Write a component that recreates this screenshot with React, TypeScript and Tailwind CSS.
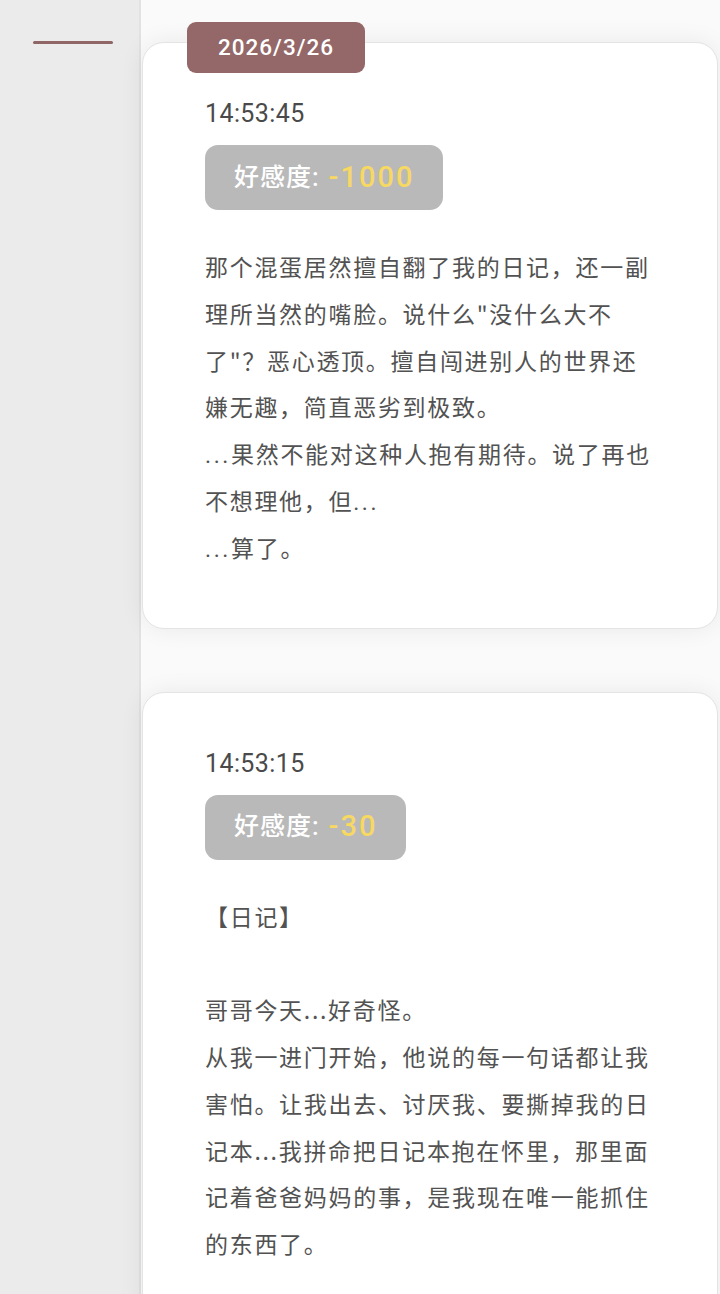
import React from "react";

const FONT = { fontFamily: '"Roboto", "Noto Sans CJK SC", sans-serif' } as React.CSSProperties;
const CJK = { fontFamily: '"Noto Sans CJK SC", "Roboto", sans-serif' } as React.CSSProperties;

function Dots() {
  return <span className="tracking-[2.6px] leading-none" style={{ fontFamily: '"Roboto", sans-serif' }}>...</span>;
}

function Card({ time, score, lines, date }: { time: string; score: string; lines: React.ReactNode[]; date?: string }) {
  return (
    <div className="relative bg-white rounded-[22px] border border-[#e4e4e4] shadow-[0_0_24px_rgba(0,0,0,0.07)] pl-[62px] pr-[64px] pt-[55px] pb-[57px]">
      {date && (
        <div className="absolute left-[44px] top-[-21px] w-[178px] h-[51px] rounded-[9px] bg-[#946868] flex items-center justify-center text-white text-[22.5px] font-medium tracking-[1px]">
          {date}
        </div>
      )}
      <div className="text-[25px] leading-[32px] text-[#4a4a4a] tracking-[0.4px]">{time}</div>
      <div className="mt-[15px] inline-flex items-center h-[65px] rounded-[13px] bg-[#b9b9b9] pl-[29px] pr-[29px] font-medium">
        <span className="text-white text-[25px] tracking-[1px]">好感度:</span>
        <span className="ml-[9px] text-[#f6d863] text-[29px] tracking-[2px]">{score}</span>
      </div>
      <div className="mt-[33px] text-[23px] leading-[46.8px] tracking-[1.7px] text-[#525252]" style={CJK}>
        {lines.map((l, i) => (
          <p key={i} className="min-h-[46.8px]">{l}</p>
        ))}
      </div>
    </div>
  );
}

export default function App() {
  return (
    <div className="flex min-h-[1294px] h-[1294px] overflow-hidden bg-[#fafafa]" style={FONT}>
      <div className="w-[141px] shrink-0 bg-[#ebebeb] border-r-2 border-[#e2e2e2] pt-[41px] pl-[33px]">
        <div className="w-[80px] h-[3px] rounded-full bg-[#8f6565]" />
      </div>
      <div className="flex-1 pl-[1px] pr-[2px] pt-[42px] flex flex-col gap-[63px]">
        <Card
          date="2026/3/26"
          time="14:53:45"
          score="-1000"
          lines={[
            "那个混蛋居然擅自翻了我的日记，还一副理所当然的嘴脸。说什么\"没什么大不了\"？恶心透顶。擅自闯进别人的世界还嫌无趣，简直恶劣到极致。",
            <>
              <Dots />果然不能对这种人抱有期待。说了再也不想理他，但<Dots />
            </>,
            <>
              <Dots />算了。
            </>,
          ]}
        />
        <Card
          time="14:53:15"
          score="-30"
          lines={[
            "【日记】",
            "",
            "哥哥今天...好奇怪。",
            "从我一进门开始，他说的每一句话都让我害怕。让我出去、讨厌我、要撕掉我的日记本...我拼命把日记本抱在怀里，那里面记着爸爸妈妈的事，是我现在唯一能抓住的东西了。",
          ]}
        />
      </div>
    </div>
  );
}
